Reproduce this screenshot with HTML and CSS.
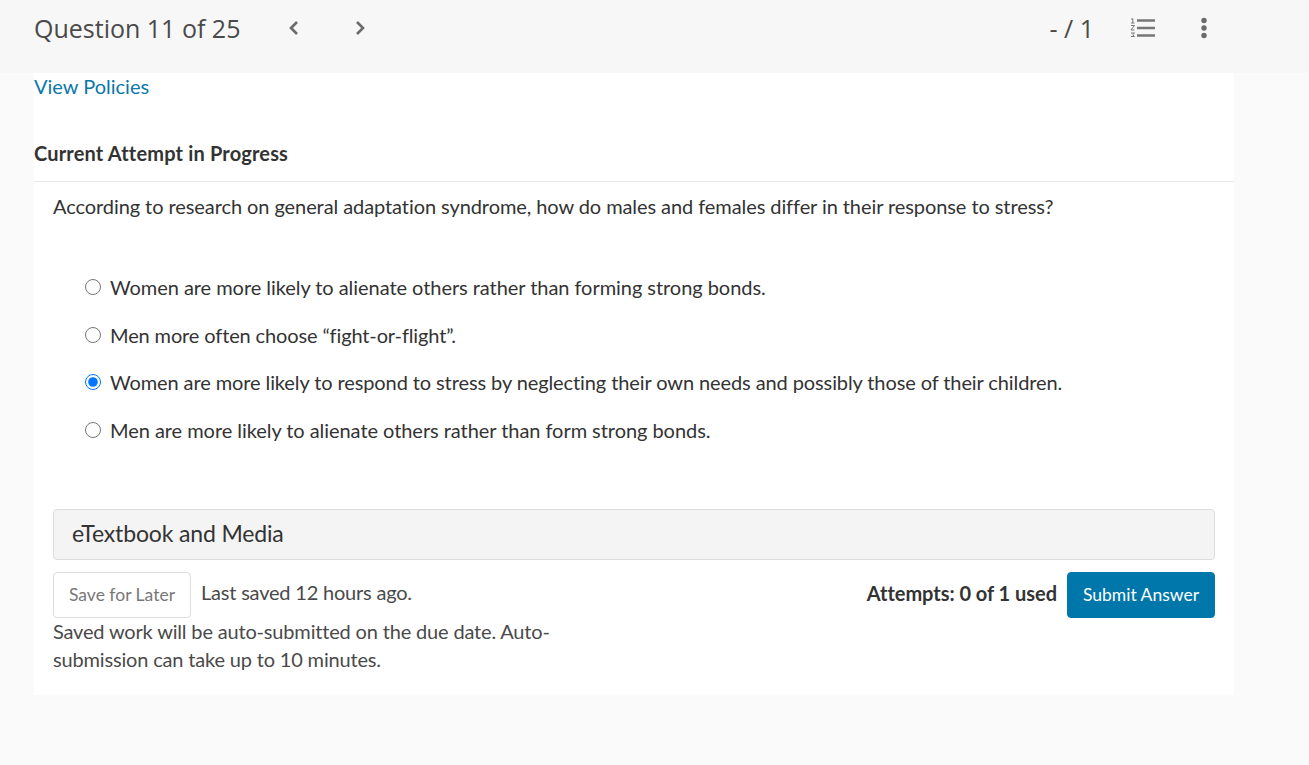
FILE: index.html
```html
<!DOCTYPE html>
<html lang="en">
<head>
<meta charset="utf-8">
<title>Question 11 of 25</title>
<link rel="stylesheet" href="styles.css">
</head>
<body>
<header class="topbar">
  <div class="nav">
    <h1 class="qtitle">Question 11 of 25</h1>
    <svg class="chev chev-prev" width="12" height="16" viewBox="0 0 12 16"><path d="M9 2 3 8l6 6" fill="none" stroke="#6b6b6b" stroke-width="2.600"/></svg>
    <svg class="chev" width="12" height="16" viewBox="0 0 12 16"><path d="M3 2l6 6-6 6" fill="none" stroke="#6b6b6b" stroke-width="2.600"/></svg>
  </div>
  <div class="tools">
    <span class="score">- / 1</span>
    <svg class="list-icon" width="25" height="20" viewBox="0 0 25 20">
      <g fill="none" stroke="#777" stroke-width="2.600"><path d="M7 2.500h18M7 10h18M7 17.500h18"/></g>
      <g fill="none" stroke="#777" stroke-width="1"><path d="M1 1.200 2.800.700v4.300M1 5h3.500M1 7.500h3.500L1 12h3.500M1 15h3.500l-1.800 1.800 1.800 1.700H1"/></g>
    </svg>
    <svg class="dots" width="8" height="22" viewBox="0 0 8 22"><g fill="#6b6b6b"><circle cx="4" cy="3.500" r="2.700"/><circle cx="4" cy="11" r="2.700"/><circle cx="4" cy="18.500" r="2.700"/></g></svg>
  </div>
</header>
<main class="card">
  <a class="policies" href="#">View Policies</a>
  <h2 class="attempt">Current Attempt in Progress</h2>
  <section class="body">
    <p class="question">According to research on general adaptation syndrome, how do males and females differ in their response to stress?</p>
    <div class="options">
      <label class="option"><input type="radio" name="a"><span>Women are more likely to alienate others rather than forming strong bonds.</span></label>
      <label class="option"><input type="radio" name="a"><span>Men more often choose “fight-or-flight”.</span></label>
      <label class="option"><input type="radio" name="a" checked><span>Women are more likely to respond to stress by neglecting their own needs and possibly those of their children.</span></label>
      <label class="option"><input type="radio" name="a"><span>Men are more likely to alienate others rather than form strong bonds.</span></label>
    </div>
    <div class="media">eTextbook and Media</div>
    <div class="actions">
      <div class="save-col">
        <div class="save-row">
          <button class="btn-save" type="button">Save for Later</button>
          <span class="saved">Last saved 12 hours ago.</span>
        </div>
        <p class="note">Saved work will be auto-submitted on the due date. Auto-submission can take up to 10 minutes.</p>
      </div>
      <div class="submit-row">
        <span class="attempts">Attempts: 0 of 1 used</span>
        <button class="btn-submit" type="button">Submit Answer</button>
      </div>
    </div>
  </section>
</main>
</body>
</html>
```
FILE: styles.css
```css
* { box-sizing: border-box; }
html, body { margin: 0; padding: 0; }
body {
  background: #fafafa;
  font-family: "Lato", sans-serif;
  font-variant-ligatures: common-ligatures;
  color: #333;
  height: 765px;
  overflow: hidden;
}
.topbar {
  height: 73px;
  background: #f7f7f7;
  display: flex;
  justify-content: space-between;
  align-items: center;
  padding: 0 101px 17px 34px;
}
.nav, .tools { display: flex; align-items: center; }
.qtitle {
  margin: 0;
  font: 400 25px/34px "Open Sans", sans-serif;
  color: #4a4a4a;
}
.chev-prev { margin-left: 48px; margin-right: 54px; }
.score {
  font: 400 25px/34px "Open Sans", sans-serif;
  color: #4a4a4a;
}
.list-icon { margin-left: 36px; }
.dots { margin-left: 45px; }
.card {
  margin-left: 34px;
  width: 1200px;
  height: 622px;
  background: #fff;
}
.policies {
  display: block;
  font-size: 20px;
  line-height: 26px;
  color: #0a78a8;
  text-decoration: none;
}
.attempt {
  margin: 0;
  padding-top: 40px;
  height: 83px;
  font-size: 20px;
  line-height: 28px;
  font-weight: 700;
  letter-spacing: 0.17px;
  color: #333;
  border-bottom: 1px solid #e8e8e8;
}
.body { padding: 10px 19px 0; }
.question {
  margin: 0;
  font-size: 20px;
  line-height: 28px;
  letter-spacing: -0.08px;
}
.options {
  margin-top: 53px;
  padding-left: 32px;
  display: flex;
  flex-direction: column;
  gap: 19.700px;
}
.option {
  display: flex;
  align-items: center;
  height: 28px;
  font-size: 20px;
  line-height: 28px;
  letter-spacing: -0.05px;
}
.option:nth-child(2) { letter-spacing: -0.13px; }
.option:nth-child(3) { letter-spacing: -0.1px; }
.option input {
  margin: 0 9px 0 0;
  width: 16px;
  height: 16px;
  flex: none;
}
.media {
  margin-top: 65px;
  height: 51px;
  padding-left: 18px;
  background: #f4f4f4;
  border: 1px solid #ddd;
  border-radius: 4px;
  font-size: 23px;
  line-height: 46px;
  letter-spacing: -0.15px;
  color: #333;
}
.actions {
  margin-top: 12px;
  display: flex;
  justify-content: space-between;
  align-items: flex-start;
}
.save-col { width: 505px; }
.save-row { display: flex; align-items: flex-start; height: 45px; }
.btn-save {
  flex: none;
  width: 138px;
  height: 46px;
  padding: 0 0 2px;
  background: #fff;
  border: 1px solid #ddd;
  border-radius: 4px;
  font: 400 17.500px "Lato", sans-serif;
  color: #777;
}
.saved {
  margin-left: 10px;
  font-size: 20px;
  line-height: 40px;
  letter-spacing: -0.2px;
  color: #4a4a4a;
}
.note {
  margin: 0;
  font-size: 20px;
  line-height: 28px;
  letter-spacing: -0.17px;
  color: #4a4a4a;
}
.submit-row { display: flex; align-items: flex-start; }
.attempts {
  font-size: 20px;
  font-weight: 700;
  line-height: 42px;
  letter-spacing: -0.03px;
  color: #333;
}
.btn-submit {
  margin-left: 10px;
  width: 148px;
  height: 46px;
  padding: 0 0 2px;
  background: #0077aa;
  border: 1px solid #0077aa;
  border-radius: 4px;
  font: 400 17.500px "Lato", sans-serif;
  color: #fff;
}
```
